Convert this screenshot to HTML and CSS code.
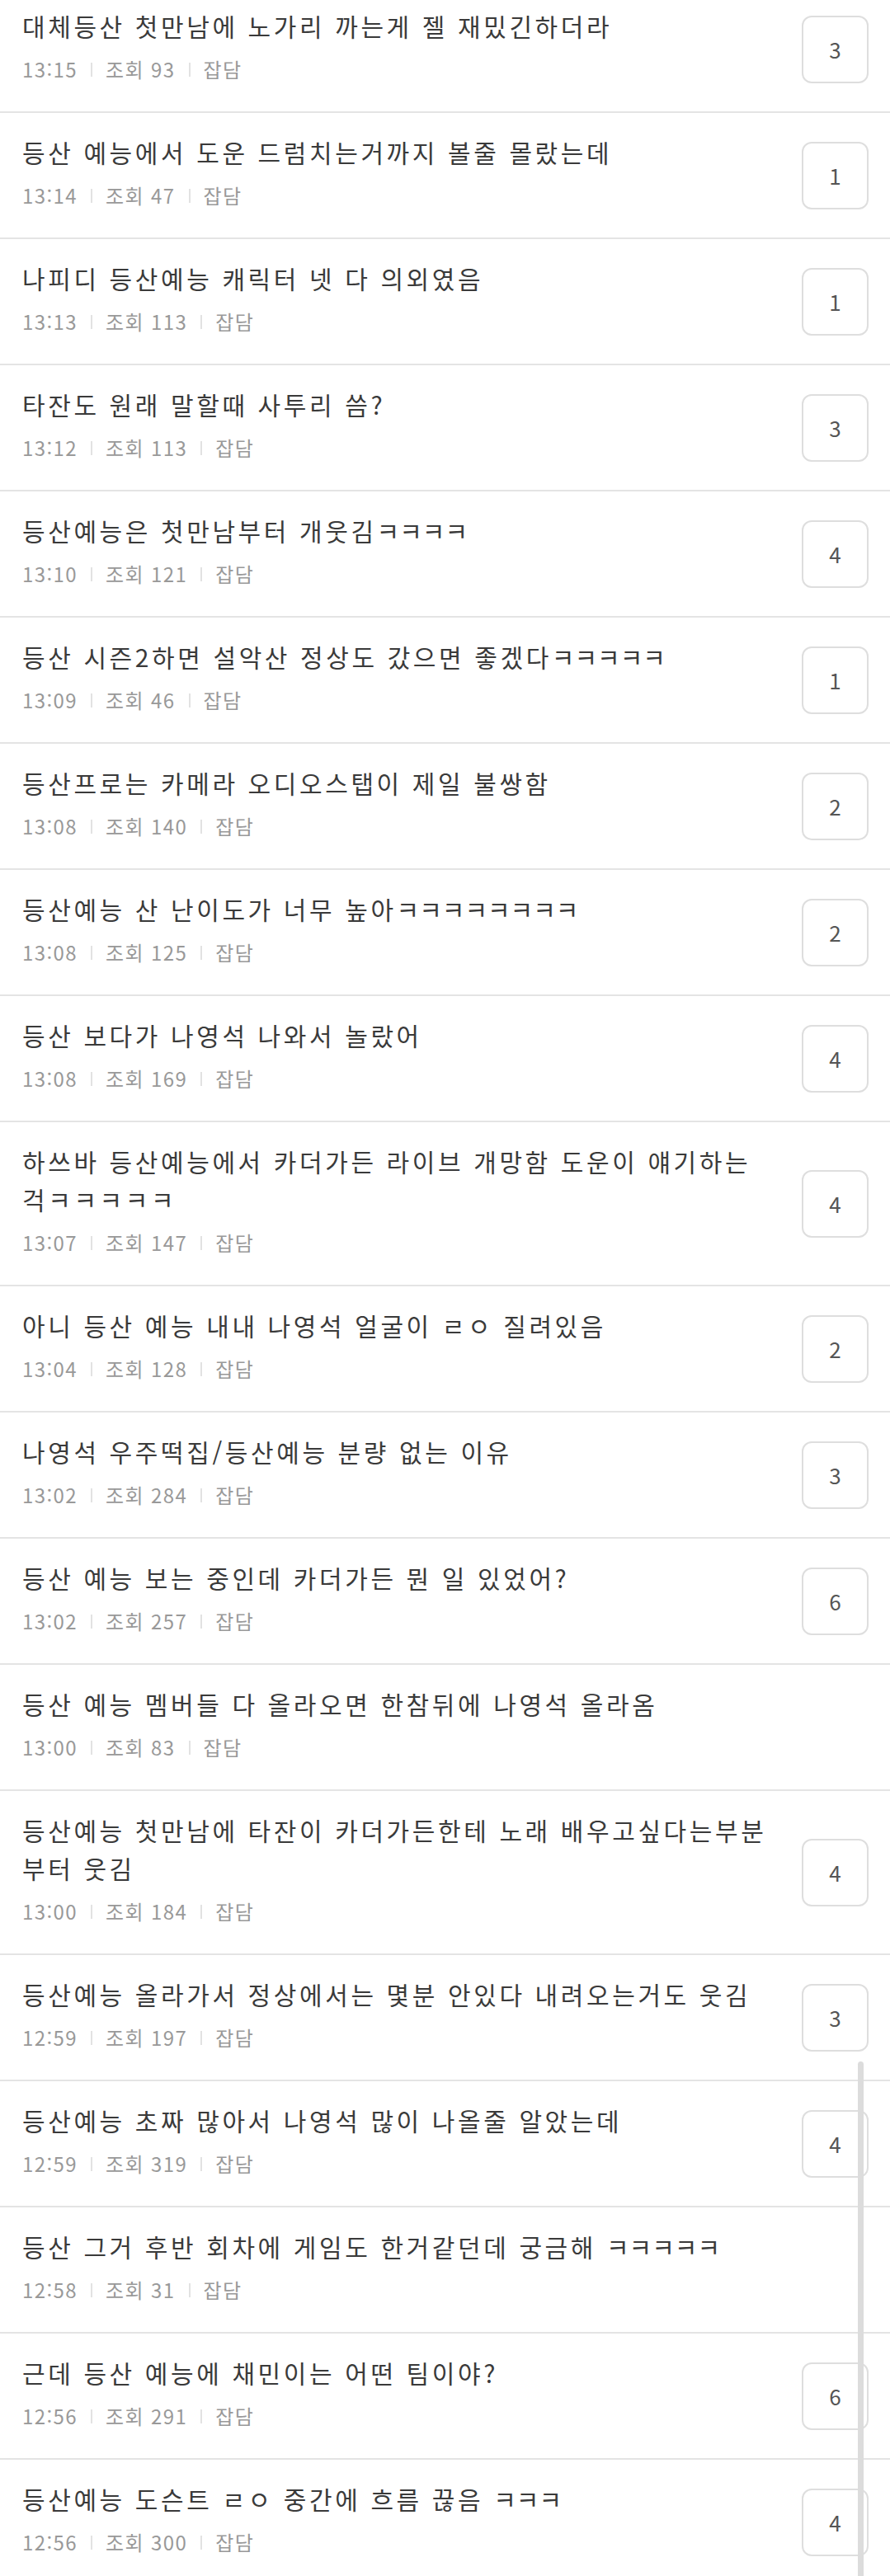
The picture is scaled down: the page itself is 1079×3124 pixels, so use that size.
FILE: index.html
```html
<!DOCTYPE html>
<html lang="ko">
<head>
    <meta charset="UTF-8">
    <meta name="viewport" content="width=device-width, initial-scale=1.0">
    <title>잡담 게시판</title>
    <link rel="stylesheet" href="styles.css">
</head>
<body>
    <ul class="post-list">
        <li class="post">
            <div class="post-body">
                <div class="post-title">대체등산 첫만남에 노가리 까는게 젤 재밌긴하더라</div>
                <div class="post-meta"><span>13:15</span><span class="bar"></span><span>조회 93</span><span class="bar"></span><span>잡담</span></div>
            </div>
            <div class="reply-count">3</div>
        </li>
        <li class="post">
            <div class="post-body">
                <div class="post-title">등산 예능에서 도운 드럼치는거까지 볼줄 몰랐는데</div>
                <div class="post-meta"><span>13:14</span><span class="bar"></span><span>조회 47</span><span class="bar"></span><span>잡담</span></div>
            </div>
            <div class="reply-count">1</div>
        </li>
        <li class="post">
            <div class="post-body">
                <div class="post-title">나피디 등산예능 캐릭터 넷 다 의외였음</div>
                <div class="post-meta"><span>13:13</span><span class="bar"></span><span>조회 113</span><span class="bar"></span><span>잡담</span></div>
            </div>
            <div class="reply-count">1</div>
        </li>
        <li class="post">
            <div class="post-body">
                <div class="post-title">타잔도 원래 말할때 사투리 씀?</div>
                <div class="post-meta"><span>13:12</span><span class="bar"></span><span>조회 113</span><span class="bar"></span><span>잡담</span></div>
            </div>
            <div class="reply-count">3</div>
        </li>
        <li class="post">
            <div class="post-body">
                <div class="post-title">등산예능은 첫만남부터 개웃김<span class="lol">ㅋㅋㅋㅋ</span></div>
                <div class="post-meta"><span>13:10</span><span class="bar"></span><span>조회 121</span><span class="bar"></span><span>잡담</span></div>
            </div>
            <div class="reply-count">4</div>
        </li>
        <li class="post">
            <div class="post-body">
                <div class="post-title">등산 시즌2하면 설악산 정상도 갔으면 좋겠다<span class="lol">ㅋㅋㅋㅋㅋ</span></div>
                <div class="post-meta"><span>13:09</span><span class="bar"></span><span>조회 46</span><span class="bar"></span><span>잡담</span></div>
            </div>
            <div class="reply-count">1</div>
        </li>
        <li class="post">
            <div class="post-body">
                <div class="post-title">등산프로는 카메라 오디오스탭이 제일 불쌍함</div>
                <div class="post-meta"><span>13:08</span><span class="bar"></span><span>조회 140</span><span class="bar"></span><span>잡담</span></div>
            </div>
            <div class="reply-count">2</div>
        </li>
        <li class="post">
            <div class="post-body">
                <div class="post-title">등산예능 산 난이도가 너무 높아<span class="lol">ㅋㅋㅋㅋㅋㅋㅋㅋ</span></div>
                <div class="post-meta"><span>13:08</span><span class="bar"></span><span>조회 125</span><span class="bar"></span><span>잡담</span></div>
            </div>
            <div class="reply-count">2</div>
        </li>
        <li class="post">
            <div class="post-body">
                <div class="post-title">등산 보다가 나영석 나와서 놀랐어</div>
                <div class="post-meta"><span>13:08</span><span class="bar"></span><span>조회 169</span><span class="bar"></span><span>잡담</span></div>
            </div>
            <div class="reply-count">4</div>
        </li>
        <li class="post">
            <div class="post-body">
                <div class="post-title">하쓰바 등산예능에서 카더가든 라이브 개망함 도운이 얘기하는걱ㅋㅋㅋㅋㅋ</div>
                <div class="post-meta"><span>13:07</span><span class="bar"></span><span>조회 147</span><span class="bar"></span><span>잡담</span></div>
            </div>
            <div class="reply-count">4</div>
        </li>
        <li class="post">
            <div class="post-body">
                <div class="post-title">아니 등산 예능 내내 나영석 얼굴이 ㄹㅇ 질려있음</div>
                <div class="post-meta"><span>13:04</span><span class="bar"></span><span>조회 128</span><span class="bar"></span><span>잡담</span></div>
            </div>
            <div class="reply-count">2</div>
        </li>
        <li class="post">
            <div class="post-body">
                <div class="post-title">나영석 우주떡집/등산예능 분량 없는 이유</div>
                <div class="post-meta"><span>13:02</span><span class="bar"></span><span>조회 284</span><span class="bar"></span><span>잡담</span></div>
            </div>
            <div class="reply-count">3</div>
        </li>
        <li class="post">
            <div class="post-body">
                <div class="post-title">등산 예능 보는 중인데 카더가든 뭔 일 있었어?</div>
                <div class="post-meta"><span>13:02</span><span class="bar"></span><span>조회 257</span><span class="bar"></span><span>잡담</span></div>
            </div>
            <div class="reply-count">6</div>
        </li>
        <li class="post">
            <div class="post-body">
                <div class="post-title">등산 예능 멤버들 다 올라오면 한참뒤에 나영석 올라옴</div>
                <div class="post-meta"><span>13:00</span><span class="bar"></span><span>조회 83</span><span class="bar"></span><span>잡담</span></div>
            </div>
        </li>
        <li class="post">
            <div class="post-body">
                <div class="post-title">등산예능 첫만남에 타잔이 카더가든한테 노래 배우고싶다는부분부터 웃김</div>
                <div class="post-meta"><span>13:00</span><span class="bar"></span><span>조회 184</span><span class="bar"></span><span>잡담</span></div>
            </div>
            <div class="reply-count">4</div>
        </li>
        <li class="post">
            <div class="post-body">
                <div class="post-title">등산예능 올라가서 정상에서는 몇분 안있다 내려오는거도 웃김</div>
                <div class="post-meta"><span>12:59</span><span class="bar"></span><span>조회 197</span><span class="bar"></span><span>잡담</span></div>
            </div>
            <div class="reply-count">3</div>
        </li>
        <li class="post">
            <div class="post-body">
                <div class="post-title">등산예능 초짜 많아서 나영석 많이 나올줄 알았는데</div>
                <div class="post-meta"><span>12:59</span><span class="bar"></span><span>조회 319</span><span class="bar"></span><span>잡담</span></div>
            </div>
            <div class="reply-count">4</div>
        </li>
        <li class="post">
            <div class="post-body">
                <div class="post-title">등산 그거 후반 회차에 게임도 한거같던데 궁금해 <span class="lol">ㅋㅋㅋㅋㅋ</span></div>
                <div class="post-meta"><span>12:58</span><span class="bar"></span><span>조회 31</span><span class="bar"></span><span>잡담</span></div>
            </div>
        </li>
        <li class="post">
            <div class="post-body">
                <div class="post-title">근데 등산 예능에 채민이는 어떤 팀이야?</div>
                <div class="post-meta"><span>12:56</span><span class="bar"></span><span>조회 291</span><span class="bar"></span><span>잡담</span></div>
            </div>
            <div class="reply-count">6</div>
        </li>
        <li class="post">
            <div class="post-body">
                <div class="post-title">등산예능 도슨트 ㄹㅇ 중간에 흐름 끊음 <span class="lol">ㅋㅋㅋ</span></div>
                <div class="post-meta"><span>12:56</span><span class="bar"></span><span>조회 300</span><span class="bar"></span><span>잡담</span></div>
            </div>
            <div class="reply-count">4</div>
        </li>
    </ul>

    <div class="scrollbar"></div>
</body>
</html>
```

FILE: styles.css
```css
body {
    margin: 0;
    position: relative;
    background: #fff;
    font-family: "Noto Sans CJK KR", "Noto Sans", sans-serif;
    color: #3a3a3a;
    overflow: hidden;
}

/* list is scrolled a little into the first post */
.post-list {
    list-style: none;
    margin: -16px 0 0;
    padding: 0;
}

.post {
    display: flex;
    align-items: center;
    padding: 19px 26px 19px 27px;
    border-bottom: 2px solid #e4e4e4;
}

.post-body {
    flex: 1;
    padding: 5px 34px 15px 0;
}

.post-title {
    font-size: 30px;
    line-height: 46px;
    letter-spacing: 3.6px;
    color: #3a3a3a;
}

.post-title .lol {
    letter-spacing: 0;
}

.post-meta {
    display: flex;
    align-items: center;
    margin-top: 13px;
    font-size: 24px;
    line-height: 34px;
    letter-spacing: 1.4px;
    color: #999;
}

.post-meta .bar {
    width: 2px;
    height: 17px;
    margin: 0 16px;
    background: #e2e2e2;
}

.reply-count {
    flex: none;
    width: 77px;
    height: 78px;
    border: 2px solid #dedede;
    border-radius: 12px;
    display: flex;
    align-items: center;
    justify-content: center;
    font-size: 26px;
    color: #555;
}

.scrollbar {
    position: absolute;
    left: 1040px;
    top: 2500px;
    width: 7px;
    height: 640px;
    border-radius: 4px;
    background: #dcdcdc;
}
```
